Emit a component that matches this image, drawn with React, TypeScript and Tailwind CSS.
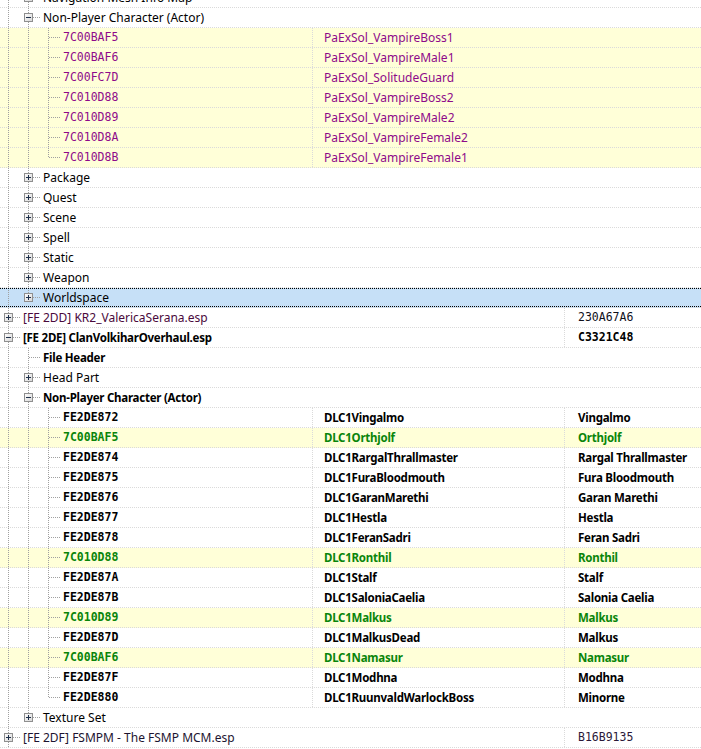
import * as React from "react"

type Kind = "plain" | "bold" | "purple" | "npc" | "green" | "file" | "fileBold"

type Row = {
  level: number
  label: string
  c2?: string
  c3?: string
  kind: Kind
  exp?: "+" | "-"
  hl?: boolean
  sel?: boolean
  color?: string
}

const npc = (id: string, edid: string, name: string, green = false): Row => ({
  level: 2,
  label: id,
  c2: edid,
  c3: name,
  kind: green ? "green" : "npc",
  hl: green,
})

const vamp = (id: string, edid: string): Row => ({
  level: 2,
  label: id,
  c2: edid,
  kind: "purple",
  hl: true,
})

const rows: Row[] = [
  { level: 1, label: "Navigation Mesh Info Map", kind: "plain", exp: "+" },
  { level: 1, label: "Non-Player Character (Actor)", kind: "plain", exp: "-" },
  vamp("7C00BAF5", "PaExSol_VampireBoss1"),
  vamp("7C00BAF6", "PaExSol_VampireMale1"),
  vamp("7C00FC7D", "PaExSol_SolitudeGuard"),
  vamp("7C010D88", "PaExSol_VampireBoss2"),
  vamp("7C010D89", "PaExSol_VampireMale2"),
  vamp("7C010D8A", "PaExSol_VampireFemale2"),
  vamp("7C010D8B", "PaExSol_VampireFemale1"),
  { level: 1, label: "Package", kind: "plain", exp: "+" },
  { level: 1, label: "Quest", kind: "plain", exp: "+" },
  { level: 1, label: "Scene", kind: "plain", exp: "+" },
  { level: 1, label: "Spell", kind: "plain", exp: "+" },
  { level: 1, label: "Static", kind: "plain", exp: "+" },
  { level: 1, label: "Weapon", kind: "plain", exp: "+" },
  { level: 1, label: "Worldspace", kind: "plain", exp: "+", sel: true },
  { level: 0, label: "[FE 2DD] KR2_ValericaSerana.esp", c3: "230A67A6", kind: "file", exp: "+", color: "text-[#4a0a3c]" },
  { level: 0, label: "[FE 2DE] ClanVolkiharOverhaul.esp", c3: "C3321C48", kind: "fileBold", exp: "-" },
  { level: 1, label: "File Header", kind: "bold" },
  { level: 1, label: "Head Part", kind: "plain", exp: "+" },
  { level: 1, label: "Non-Player Character (Actor)", kind: "bold", exp: "-" },
  npc("FE2DE872", "DLC1Vingalmo", "Vingalmo"),
  npc("7C00BAF5", "DLC1Orthjolf", "Orthjolf", true),
  npc("FE2DE874", "DLC1RargalThrallmaster", "Rargal Thrallmaster"),
  npc("FE2DE875", "DLC1FuraBloodmouth", "Fura Bloodmouth"),
  npc("FE2DE876", "DLC1GaranMarethi", "Garan Marethi"),
  npc("FE2DE877", "DLC1Hestla", "Hestla"),
  npc("FE2DE878", "DLC1FeranSadri", "Feran Sadri"),
  npc("7C010D88", "DLC1Ronthil", "Ronthil", true),
  npc("FE2DE87A", "DLC1Stalf", "Stalf"),
  npc("FE2DE87B", "DLC1SaloniaCaelia", "Salonia Caelia"),
  npc("7C010D89", "DLC1Malkus", "Malkus", true),
  npc("FE2DE87D", "DLC1MalkusDead", "Malkus"),
  npc("7C00BAF6", "DLC1Namasur", "Namasur", true),
  npc("FE2DE87F", "DLC1Modhna", "Modhna"),
  npc("FE2DE880", "DLC1RuunvaldWarlockBoss", "Minorne"),
  { level: 1, label: "Texture Set", kind: "plain", exp: "+" },
  { level: 0, label: "[FE 2DF] FSMPM - The FSMP MCM.esp", c3: "B16B9135", kind: "file", exp: "+", color: "text-[#1c1430]" },
]

// does the branch at level k continue below row i
function continues(i: number, k: number) {
  for (let j = i + 1; j < rows.length; j++) {
    if (rows[j].level < k) return false
    if (rows[j].level === k) return true
  }
  return k === 0
}

function TreeLines({ i }: { i: number }) {
  const r = rows[i]
  const L = r.level
  const w = 23 + 20 * L
  const cx = 8 + 20 * L
  const dash = "1 1"
  const line = "#a0a0a0"
  const guides: React.ReactNode[] = []
  for (let k = 0; k < L; k++) {
    if (continues(i, k)) {
      const x = 8 + 20 * k + 0.5
      guides.push(<line key={k} x1={x} x2={x} y1={0} y2={20} stroke={line} strokeDasharray={dash} />)
    }
  }
  const next = continues(i, L)
  return (
    <svg width={w} height={20} className="shrink-0 self-start overflow-visible">
      {guides}
      <line x1={cx + 0.5} x2={cx + 0.5} y1={0} y2={next ? 20 : 10} stroke={line} strokeDasharray={dash} />
      <line x1={cx + 1} x2={w - 3} y1={9.5} y2={9.5} stroke={line} strokeDasharray={dash} />
      {r.exp && (
        <g>
          <defs>
            <linearGradient id="xg" x1="0" y1="0" x2="1" y2="1">
              <stop offset="0" stopColor="#ffffff" />
              <stop offset="1" stopColor="#d6d6d6" />
            </linearGradient>
          </defs>
          <rect x={cx - 3.5} y={5.5} width={8} height={8} fill="url(#xg)" stroke="#8f8f8f" />
          <line x1={cx - 2} x2={cx + 3} y1={9.5} y2={9.5} stroke="#1e2f4a" />
          {r.exp === "+" && <line x1={cx + 0.5} x2={cx + 0.5} y1={7} y2={12} stroke="#1e2f4a" />}
        </g>
      )}
    </svg>
  )
}

const mono = "font-['DejaVu_Sans_Mono',monospace] text-[11.5px]"
const bold = "text-[11.5px] font-bold tracking-[-0.25px]"

function labelClass(r: Row) {
  switch (r.kind) {
    case "purple":
      return `${mono} text-[#8e0a8a]`
    case "npc":
      return `${mono} font-bold text-black`
    case "green":
      return `${mono} font-bold text-[#0a850a]`
    case "bold":
    case "fileBold":
      return `${bold} text-black`
    case "file":
      return r.color ?? "text-black"
    default:
      return "text-black"
  }
}

function nameClass(r: Row) {
  if (r.kind === "purple") return "text-[#8e0a8a]"
  if (r.kind === "green") return `${bold} text-[#0a850a]`
  return `${bold} text-black`
}

function c3Class(r: Row) {
  if (r.kind === "fileBold") return `${mono} font-bold text-black`
  if (r.kind === "file") return `${mono} ${r.label.includes("2DF") ? "text-[#2a1838]" : "text-[#10101a]"}`
  return nameClass(r)
}

function TreeRow({ i }: { i: number }) {
  const r = rows[i]
  const bg = r.sel ? "bg-[#c6e0f7]" : r.hl ? "bg-[#ffffd8]" : "bg-white"
  const col1 = r.c2 ? "w-[312px] shrink-0" : r.c3 ? "w-[564px] shrink-0" : "flex-1"
  return (
    <div className={`relative flex h-[20px] items-center border-b border-dotted border-[#dadada] ${bg}`}>
      <div className={`flex h-full items-center overflow-hidden whitespace-nowrap ${col1}`}>
        <TreeLines i={i} />
        <span className={labelClass(r)}>{r.label}</span>
      </div>
      {r.c2 && (
        <div
          className={`flex h-full items-center overflow-hidden whitespace-nowrap border-l border-dotted border-[#dadada] pl-[11px] ${
            r.c3 ? "w-[252px] shrink-0" : "flex-1"
          } ${nameClass(r)}`}
        >
          {r.c2}
        </div>
      )}
      {r.c3 && (
        <div className={`flex h-full flex-1 items-center overflow-hidden whitespace-nowrap border-l border-dotted border-[#dadada] pl-[13px] ${c3Class(r)}`}>
          {r.c3}
        </div>
      )}
      {r.sel && <span className="pointer-events-none absolute inset-0 border-y border-dotted border-black" />}
    </div>
  )
}

export default function App() {
  return (
    <div className="h-[749px] w-[701px] overflow-hidden bg-white font-['Noto_Sans',sans-serif] text-[12px] leading-none">
      <div className="-mt-[12px]">
        {rows.map((_, i) => (
          <TreeRow key={i} i={i} />
        ))}
      </div>
    </div>
  )
}
